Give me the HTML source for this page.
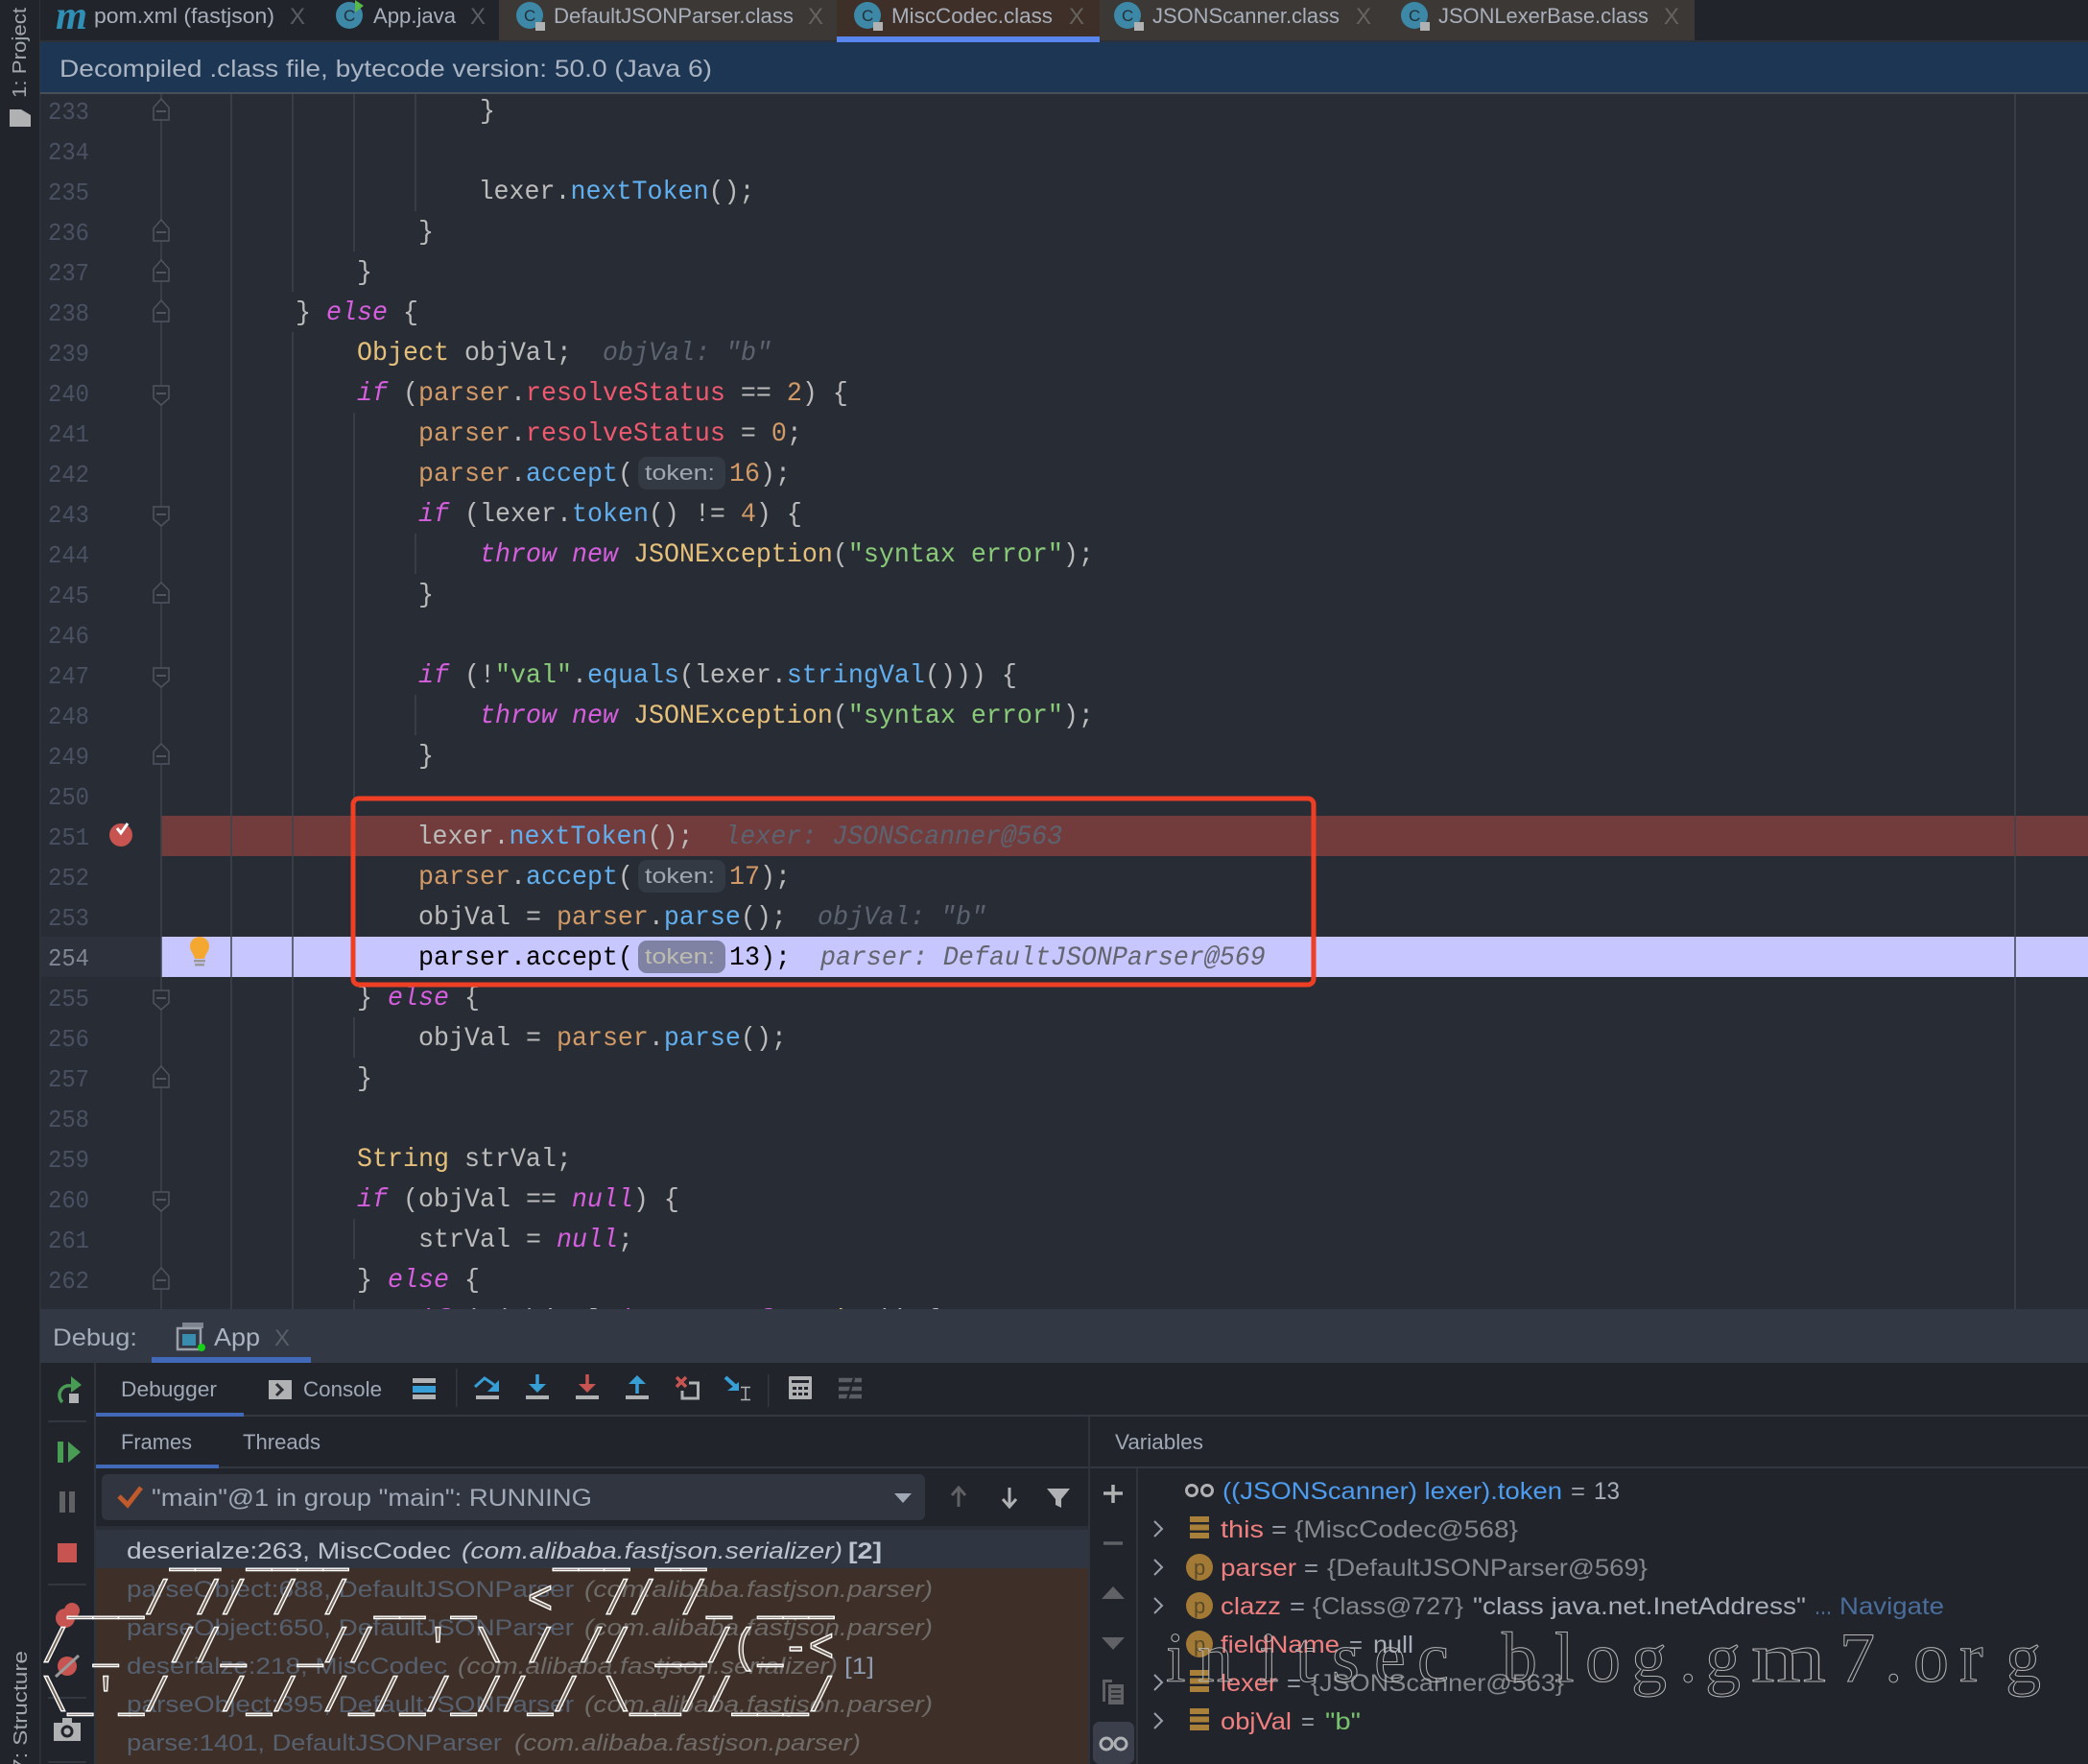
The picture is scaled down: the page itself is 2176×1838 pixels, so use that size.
<!DOCTYPE html>
<html><head><meta charset="utf-8"><title>IDE</title>
<style>
html,body{margin:0;padding:0;background:#21252b;width:2176px;height:1838px;overflow:hidden}
svg{display:block}
text{white-space:pre}
.u{font-family:"Liberation Sans",sans-serif}
.mono{font-family:"Liberation Mono",monospace}
.code text{font-family:"Liberation Mono",monospace;font-size:28px;fill:#bbbbbb}
.ln text{font-family:"Liberation Mono",monospace;font-size:26px;fill:#495162}
.k{fill:#d55fde;font-style:italic}.m{fill:#61afef}.f{fill:#ef596f}.p{fill:#d19a66}.c{fill:#e5c07b}.s{fill:#89ca78}.h{fill:#5c6370;font-style:italic}
.fold{fill:#282c34;stroke:#4f545e;stroke-width:1.5}
.g{stroke:#3f434c;stroke-width:1.5}
.tab{font-size:22px;fill:#a8afbb}
.fr{font-size:24px;fill:#56606f}.fi{font-size:24px;fill:#6f6b68;font-style:italic}
.v{font-size:25px}.nm{fill:#f08080}.eq{fill:#9aa0aa}.val{fill:#85888c}
</style></head><body>
<svg xmlns="http://www.w3.org/2000/svg" width="2176" height="1838" viewBox="0 0 2176 1838">
<rect width="2176" height="1838" fill="#21252b"/>
<!-- editor -->
<rect x="42" y="96" width="2134" height="1270" fill="#282c34"/>
<rect x="41" y="0" width="1.5" height="1838" fill="#2f333b"/>
<!-- tabs -->
<rect x="42" y="0" width="2134" height="42" fill="#21252b"/>
<rect x="520" y="0" width="352" height="42" fill="#3b3835"/>
<rect x="872" y="0" width="274" height="44" fill="#3e3028"/>
<rect x="1146" y="0" width="620" height="42" fill="#3b3835"/>
<rect x="42" y="42" width="2134" height="2" fill="#2c3038"/>
<rect x="872" y="38" width="274" height="6" fill="#5886ee"/>
<text x="58" y="30" font-family="Liberation Serif" font-style="italic" font-weight="bold" font-size="42" fill="#2f8fb5" textLength="33" lengthAdjust="spacingAndGlyphs">m</text>
<text class="u tab" x="98" y="24" textLength="188" lengthAdjust="spacingAndGlyphs">pom.xml (fastjson)</text>
<text class="u" x="302" y="25" font-size="24" fill="#5a5d62" textLength="16" lengthAdjust="spacingAndGlyphs">X</text>
<circle cx="364" cy="16" r="14" fill="#3d88a6"/><text class="u" x="358" y="22" font-size="17" fill="#21303a">C</text><path d="M370 0v13l9-7z" fill="#58b848"/>
<text class="u tab" x="389" y="24" textLength="86" lengthAdjust="spacingAndGlyphs">App.java</text>
<text class="u" x="490" y="25" font-size="24" fill="#5a5d62" textLength="16" lengthAdjust="spacingAndGlyphs">X</text>
<circle cx="552" cy="16" r="14" fill="#3d88a6"/><text class="u" x="546" y="22" font-size="17" fill="#21303a">C</text><rect x="558" y="23" width="10" height="9" fill="#afb1b3"/>
<text class="u tab" x="577" y="24" textLength="250" lengthAdjust="spacingAndGlyphs">DefaultJSONParser.class</text>
<text class="u" x="842" y="25" font-size="24" fill="#66645f" textLength="16" lengthAdjust="spacingAndGlyphs">X</text>
<circle cx="904" cy="16" r="14" fill="#3d88a6"/><text class="u" x="898" y="22" font-size="17" fill="#21303a">C</text><rect x="910" y="23" width="10" height="9" fill="#afb1b3"/>
<text class="u tab" x="929" y="24" textLength="168" lengthAdjust="spacingAndGlyphs">MiscCodec.class</text>
<text class="u" x="1114" y="25" font-size="24" fill="#66645f" textLength="16" lengthAdjust="spacingAndGlyphs">X</text>
<circle cx="1175" cy="16" r="14" fill="#3d88a6"/><text class="u" x="1169" y="22" font-size="17" fill="#21303a">C</text><rect x="1182" y="23" width="10" height="9" fill="#afb1b3"/>
<text class="u tab" x="1201" y="24" textLength="195" lengthAdjust="spacingAndGlyphs">JSONScanner.class</text>
<text class="u" x="1413" y="25" font-size="24" fill="#66645f" textLength="16" lengthAdjust="spacingAndGlyphs">X</text>
<circle cx="1474" cy="16" r="14" fill="#3d88a6"/><text class="u" x="1468" y="22" font-size="17" fill="#21303a">C</text><rect x="1480" y="23" width="10" height="9" fill="#afb1b3"/>
<text class="u tab" x="1499" y="24" textLength="219" lengthAdjust="spacingAndGlyphs">JSONLexerBase.class</text>
<text class="u" x="1734" y="25" font-size="24" fill="#66645f" textLength="16" lengthAdjust="spacingAndGlyphs">X</text>
<!-- banner -->
<rect x="42" y="44" width="2134" height="52" fill="#1c3653"/>
<rect x="42" y="96" width="2134" height="2" fill="#474f58"/>
<text class="u" x="62" y="80" font-size="25" fill="#aab4c2" textLength="680" lengthAdjust="spacingAndGlyphs">Decompiled .class file, bytecode version: 50.0 (Java 6)</text>
<!-- bands -->
<rect x="42" y="976" width="126" height="42" fill="#2d313b"/>
<rect x="168" y="850" width="2008" height="42" fill="#733c3c"/>
<rect x="168" y="976" width="2008" height="42" fill="#c8c6ff"/>
<!-- guides -->
<path class="g" d="M168 98V1364M241 98V1364M305 98V304M305 346V1364M369 98V262M369 430V1018M369 1060V1102M369 1270V1312M369 1354V1364M433 98V220M433 556V598M433 724V766M2100 98V1364" fill="none"/>
<!-- fold -->
<g>
<path class="fold" d="M160 125V112L168 103L176 112V125Z"/><path d="M163 116h10" stroke="#4f545e" stroke-width="2"/>
<path class="fold" d="M160 251V238L168 229L176 238V251Z"/><path d="M163 242h10" stroke="#4f545e" stroke-width="2"/>
<path class="fold" d="M160 293V280L168 271L176 280V293Z"/><path d="M163 284h10" stroke="#4f545e" stroke-width="2"/>
<path class="fold" d="M160 335V322L168 313L176 322V335Z"/><path d="M163 326h10" stroke="#4f545e" stroke-width="2"/>
<path class="fold" d="M160 402V415L168 422L176 415V402Z"/><path d="M163 410h10" stroke="#4f545e" stroke-width="2"/>
<path class="fold" d="M160 528V541L168 548L176 541V528Z"/><path d="M163 536h10" stroke="#4f545e" stroke-width="2"/>
<path class="fold" d="M160 628V615L168 607L176 615V628Z"/><path d="M163 620h10" stroke="#4f545e" stroke-width="2"/>
<path class="fold" d="M160 696V709L168 716L176 709V696Z"/><path d="M163 704h10" stroke="#4f545e" stroke-width="2"/>
<path class="fold" d="M160 796V783L168 775L176 783V796Z"/><path d="M163 788h10" stroke="#4f545e" stroke-width="2"/>
<path class="fold" d="M160 1032V1045L168 1052L176 1045V1032Z"/><path d="M163 1040h10" stroke="#4f545e" stroke-width="2"/>
<path class="fold" d="M160 1133V1120L168 1111L176 1120V1133Z"/><path d="M163 1124h10" stroke="#4f545e" stroke-width="2"/>
<path class="fold" d="M160 1242V1255L168 1262L176 1255V1242Z"/><path d="M163 1250h10" stroke="#4f545e" stroke-width="2"/>
<path class="fold" d="M160 1343V1330L168 1321L176 1330V1343Z"/><path d="M163 1334h10" stroke="#4f545e" stroke-width="2"/>
</g>
<!-- line numbers -->
<g class="ln">
<text x="50" y="124" textLength="43" lengthAdjust="spacingAndGlyphs">233</text>
<text x="50" y="166" textLength="43" lengthAdjust="spacingAndGlyphs">234</text>
<text x="50" y="208" textLength="43" lengthAdjust="spacingAndGlyphs">235</text>
<text x="50" y="250" textLength="43" lengthAdjust="spacingAndGlyphs">236</text>
<text x="50" y="292" textLength="43" lengthAdjust="spacingAndGlyphs">237</text>
<text x="50" y="334" textLength="43" lengthAdjust="spacingAndGlyphs">238</text>
<text x="50" y="376" textLength="43" lengthAdjust="spacingAndGlyphs">239</text>
<text x="50" y="418" textLength="43" lengthAdjust="spacingAndGlyphs">240</text>
<text x="50" y="460" textLength="43" lengthAdjust="spacingAndGlyphs">241</text>
<text x="50" y="502" textLength="43" lengthAdjust="spacingAndGlyphs">242</text>
<text x="50" y="544" textLength="43" lengthAdjust="spacingAndGlyphs">243</text>
<text x="50" y="586" textLength="43" lengthAdjust="spacingAndGlyphs">244</text>
<text x="50" y="628" textLength="43" lengthAdjust="spacingAndGlyphs">245</text>
<text x="50" y="670" textLength="43" lengthAdjust="spacingAndGlyphs">246</text>
<text x="50" y="712" textLength="43" lengthAdjust="spacingAndGlyphs">247</text>
<text x="50" y="754" textLength="43" lengthAdjust="spacingAndGlyphs">248</text>
<text x="50" y="796" textLength="43" lengthAdjust="spacingAndGlyphs">249</text>
<text x="50" y="838" textLength="43" lengthAdjust="spacingAndGlyphs">250</text>
<text x="50" y="880" textLength="43" lengthAdjust="spacingAndGlyphs">251</text>
<text x="50" y="922" textLength="43" lengthAdjust="spacingAndGlyphs">252</text>
<text x="50" y="964" textLength="43" lengthAdjust="spacingAndGlyphs">253</text>
<text x="50" y="1006" textLength="43" lengthAdjust="spacingAndGlyphs" style="fill:#7f8694">254</text>
<text x="50" y="1048" textLength="43" lengthAdjust="spacingAndGlyphs">255</text>
<text x="50" y="1090" textLength="43" lengthAdjust="spacingAndGlyphs">256</text>
<text x="50" y="1132" textLength="43" lengthAdjust="spacingAndGlyphs">257</text>
<text x="50" y="1174" textLength="43" lengthAdjust="spacingAndGlyphs">258</text>
<text x="50" y="1216" textLength="43" lengthAdjust="spacingAndGlyphs">259</text>
<text x="50" y="1258" textLength="43" lengthAdjust="spacingAndGlyphs">260</text>
<text x="50" y="1300" textLength="43" lengthAdjust="spacingAndGlyphs">261</text>
<text x="50" y="1342" textLength="43" lengthAdjust="spacingAndGlyphs">262</text>
</g>
<!-- inlays -->
<rect x="665" y="476" width="91" height="34" rx="9" fill="#343a44"/>
<rect x="665" y="896" width="91" height="34" rx="9" fill="#343a44"/>
<rect x="665" y="980" width="91" height="34" rx="9" fill="#7f82a3"/>
<text class="u" x="672" y="500" font-size="22" fill="#a3a8b0" textLength="73" lengthAdjust="spacingAndGlyphs">token:</text>
<text class="u" x="672" y="920" font-size="22" fill="#a3a8b0" textLength="73" lengthAdjust="spacingAndGlyphs">token:</text>
<text class="u" x="672" y="1004" font-size="22" fill="#bdbdb0" textLength="73" lengthAdjust="spacingAndGlyphs">token:</text>
<!-- code -->
<g class="code" transform="translate(180 -1) scale(.95238 1)">
<text x="336" y="124">}</text>
<text x="334.500" y="208">lexer.<tspan class="m">nextToken</tspan>();</text>
<text x="268.8" y="250">}</text>
<text x="201.6" y="292">}</text>
<text x="134.4" y="334">} <tspan class="k">else</tspan> {</text>
<text x="201.6" y="376"><tspan class="c">Object</tspan> objVal;</text><text x="470.4" y="376" class="h" style="fill:#5c6370">objVal: "b"</text>
<text x="201.6" y="418"><tspan class="k">if</tspan> (<tspan class="p">parser</tspan>.<tspan class="f">resolveStatus</tspan> == <tspan class="p">2</tspan>) {</text>
<text x="268.8" y="460"><tspan class="p">parser</tspan>.<tspan class="f">resolveStatus</tspan> = <tspan class="p">0</tspan>;</text>
<text x="268.8" y="502"><tspan class="p">parser</tspan>.<tspan class="m">accept</tspan>(</text><text x="609" y="502"><tspan class="p">16</tspan>);</text>
<text x="268.8" y="544"><tspan class="k">if</tspan> (lexer.<tspan class="m">token</tspan>() != <tspan class="p">4</tspan>) {</text>
<text x="336" y="586"><tspan class="k">throw new</tspan> <tspan class="c">JSONException</tspan>(<tspan class="s">"syntax error"</tspan>);</text>
<text x="268.8" y="628">}</text>
<text x="268.8" y="712"><tspan class="k">if</tspan> (!<tspan class="s">"val"</tspan>.<tspan class="m">equals</tspan>(lexer.<tspan class="m">stringVal</tspan>())) {</text>
<text x="336" y="754"><tspan class="k">throw new</tspan> <tspan class="c">JSONException</tspan>(<tspan class="s">"syntax error"</tspan>);</text>
<text x="268.8" y="796">}</text>
<text x="267.300" y="880">lexer.<tspan class="m">nextToken</tspan>();</text><text x="604" y="880" class="h" style="fill:#5c6370">lexer: JSONScanner@563</text>
<text x="268.8" y="922"><tspan class="p">parser</tspan>.<tspan class="m">accept</tspan>(</text><text x="609" y="922"><tspan class="p">17</tspan>);</text>
<text x="268.8" y="964">objVal = <tspan class="p">parser</tspan>.<tspan class="m">parse</tspan>();</text><text x="705.600" y="964" class="h" style="fill:#5c6370">objVal: "b"</text>
<text x="268.8" y="1006" style="fill:#000">parser.accept(</text><text x="609" y="1006" style="fill:#000">13);</text><text x="708.7" y="1006" class="h" style="fill:#62646e">parser: DefaultJSONParser@569</text>
<text x="201.6" y="1048">} <tspan class="k">else</tspan> {</text>
<text x="268.8" y="1090">objVal = <tspan class="p">parser</tspan>.<tspan class="m">parse</tspan>();</text>
<text x="201.6" y="1132">}</text>
<text x="201.6" y="1216"><tspan class="c">String</tspan> strVal;</text>
<text x="201.6" y="1258"><tspan class="k">if</tspan> (objVal == <tspan class="k">null</tspan>) {</text>
<text x="268.8" y="1300">strVal = <tspan class="k">null</tspan>;</text>
<text x="201.6" y="1342">} <tspan class="k">else</tspan> {</text>
<text x="268.8" y="1384"><tspan class="k">if</tspan> (!(objVal <tspan class="k">instanceof</tspan> <tspan class="c">String</tspan>)) {</text>
</g>
<!-- breakpoint & bulb -->
<circle cx="126" cy="870" r="12" fill="#c75450"/>
<path d="M122 863l4 5 7-10" fill="none" stroke="#fff" stroke-width="3"/>
<path d="M198 986a10 10 0 0 1 20 0c0 5-4 8-5 13h-10c-1-5-5-8-5-13z" fill="#f4a82f"/>
<rect x="202" y="1000" width="12" height="2.5" fill="#9a9a9a"/><rect x="203" y="1004" width="10" height="2.5" fill="#9a9a9a"/>
<!-- red box -->
<rect x="368" y="832" width="1001" height="194" rx="6" fill="none" stroke="#ee3f24" stroke-width="5"/>
<!-- debug header -->
<rect x="42" y="1364" width="2134" height="56" fill="#323844"/>
<text class="u" x="55" y="1402" font-size="25" fill="#a3acb9" textLength="88" lengthAdjust="spacingAndGlyphs">Debug:</text>
<rect x="190" y="1378" width="22" height="6" fill="#7f8590"/>
<rect x="185" y="1384" width="24" height="22" fill="none" stroke="#9aa0aa" stroke-width="2.5"/>
<rect x="190" y="1390" width="14" height="12" fill="#3a8cae"/>
<circle cx="210" cy="1404" r="4" fill="#18d018"/>
<text class="u" x="223" y="1402" font-size="26" fill="#aab3c0" textLength="48" lengthAdjust="spacingAndGlyphs">App</text>
<text class="u" x="286" y="1402" font-size="24" fill="#5a5f68" textLength="16" lengthAdjust="spacingAndGlyphs">X</text>
<rect x="158" y="1414" width="166" height="6" fill="#4169b8"/>
<!-- rails -->
<rect x="41" y="1420" width="1.5" height="418" fill="#2f333b"/>
<rect x="98" y="1420" width="2" height="418" fill="#2f333b"/>
<!-- toolbar -->
<rect x="100" y="1474" width="2076" height="2" fill="#33373f"/>
<rect x="100" y="1472" width="154" height="4" fill="#4169b8"/>
<text class="u" x="126" y="1455" font-size="22" fill="#a0a8b6" textLength="100" lengthAdjust="spacingAndGlyphs">Debugger</text>
<rect x="280" y="1438" width="24" height="20" fill="#afb1b3"/><path d="M288 1442l6 6-6 6" fill="none" stroke="#2a2d33" stroke-width="3"/>
<text class="u" x="316" y="1455" font-size="22" fill="#a0a8b6" textLength="82" lengthAdjust="spacingAndGlyphs">Console</text>
<rect x="430" y="1436" width="24" height="5" fill="#afb1b3"/><rect x="430" y="1444" width="24" height="7" fill="#389fd6"/><rect x="430" y="1453" width="24" height="5" fill="#afb1b3"/>
<rect x="475" y="1426" width="1.5" height="40" fill="#33373f"/>
<path d="M495 1445l10-9 10 7" fill="none" stroke="#389fd6" stroke-width="3"/><path d="M520 1438v12h-12z" fill="#389fd6"/><rect x="496" y="1454" width="24" height="4" fill="#afb1b3"/>
<path d="M560 1432v11" stroke="#389fd6" stroke-width="3.5"/><path d="M551 1442h18l-9 9z" fill="#389fd6"/><rect x="548" y="1454" width="24" height="4" fill="#afb1b3"/>
<path d="M612 1432v11" stroke="#c75450" stroke-width="3.5"/><path d="M603 1442h18l-9 9z" fill="#c75450"/><rect x="600" y="1454" width="24" height="4" fill="#afb1b3"/>
<path d="M655 1442h18l-9-9z" fill="#389fd6"/><path d="M664 1441v11" stroke="#389fd6" stroke-width="3.5"/><rect x="652" y="1454" width="24" height="4" fill="#afb1b3"/>
<path d="M705 1435l10 10M715 1435l-10 10" stroke="#c75450" stroke-width="3.5"/><path d="M718 1441h9.500v16h-16.500v-8" fill="none" stroke="#afb1b3" stroke-width="3"/>
<path d="M756 1435l11 10" stroke="#389fd6" stroke-width="4"/><path d="M770 1440v9h-12z" fill="#389fd6"/><path d="M772 1445.500h10M777 1445v14M772 1458.500h10" stroke="#afb1b3" stroke-width="1.500" fill="none"/>
<rect x="800" y="1432" width="1.500" height="34" fill="#33373f"/>
<rect x="822" y="1434" width="24" height="24" rx="1" fill="#afb1b3"/><rect x="825" y="1438" width="18" height="3" fill="#21252b"/><path d="M826 1445h4v3h-4zM832 1445h4v3h-4zM838 1445h4v3h-4zM826 1451h4v3h-4zM832 1451h4v3h-4zM838 1451h4v3h-4z" fill="#21252b"/>
<path d="M874 1438h24M874 1447h24M874 1455h24" stroke="#5a5d63" stroke-width="4.500"/><path d="M890 1436l-7 22" stroke="#21252b" stroke-width="2.500"/>
<!-- left rail icons -->
<path d="M65 1461a10 10 0 0 1 9-17" fill="none" stroke="#499c54" stroke-width="3.500"/><path d="M74 1434l11 9-11 8z" fill="#499c54"/><rect x="72" y="1452" width="10" height="10" fill="#afb1b3"/>
<rect x="50" y="1480" width="40" height="2" fill="#33373f"/>
<rect x="60" y="1502" width="6" height="22" fill="#499c54"/><path d="M71 1502l13 11-13 11z" fill="#499c54"/>
<rect x="62" y="1554" width="6" height="22" fill="#5f6165"/><rect x="72" y="1554" width="6" height="22" fill="#5f6165"/>
<rect x="60" y="1608" width="20" height="20" fill="#c75450"/>
<rect x="50" y="1650" width="40" height="2" fill="#33373f"/>
<circle cx="75" cy="1678" r="8" fill="#c75450"/><circle cx="68" cy="1686" r="10" fill="#c75450"/>
<circle cx="70" cy="1736" r="10" fill="#c75450"/><path d="M58 1747l24-22" stroke="#9a9a9a" stroke-width="3"/>
<rect x="50" y="1768" width="40" height="2" fill="#33373f"/>
<rect x="56" y="1795" width="28" height="19" fill="#afb1b3"/><rect x="65" y="1790" width="10" height="5" fill="#afb1b3"/><circle cx="70" cy="1804" r="5" fill="none" stroke="#21252b" stroke-width="3"/>
<rect x="50" y="1835" width="40" height="2" fill="#33373f"/>
<!-- left tool strip -->
<text class="u" transform="translate(27 102) rotate(-90)" font-size="20" fill="#a3a8ae" textLength="94" lengthAdjust="spacingAndGlyphs">1: Project</text>
<path d="M10 114h12l10 6v12H10z" fill="#afb1b3"/>
<text class="u" transform="translate(28 1846) rotate(-90)" font-size="20" fill="#a3a8ae" textLength="126" lengthAdjust="spacingAndGlyphs">7: Structure</text>
<!-- frames tabs -->
<text class="u" x="126" y="1510" font-size="22" fill="#a0a8b6" textLength="74" lengthAdjust="spacingAndGlyphs">Frames</text>
<text class="u" x="253" y="1510" font-size="22" fill="#a0a8b6" textLength="81" lengthAdjust="spacingAndGlyphs">Threads</text>
<text class="u" x="1162" y="1510" font-size="22" fill="#a0a8b6" textLength="92" lengthAdjust="spacingAndGlyphs">Variables</text>
<rect x="100" y="1528" width="2076" height="2" fill="#33373f"/>
<rect x="100" y="1526" width="128" height="4" fill="#4169b8"/>
<rect x="106" y="1536" width="858" height="48" rx="6" fill="#31353f"/>
<path d="M124 1559l9 9 14-18" fill="none" stroke="#c05a2c" stroke-width="5"/>
<text class="u" x="158" y="1569" font-size="25" fill="#a0a9b7" textLength="459" lengthAdjust="spacingAndGlyphs">"main"@1 in group "main": RUNNING</text>
<path d="M932 1556h18l-9 10z" fill="#a0a8b6"/>
<path d="M999 1550v20M992 1558l7-8 7 8" fill="none" stroke="#5f6165" stroke-width="3"/>
<path d="M1052 1550v20M1045 1562l7 8 7-8" fill="none" stroke="#afb1b3" stroke-width="3"/>
<path d="M1091 1551h24l-9 11v9l-6-3v-6z" fill="#afb1b3"/>
<rect x="100" y="1590" width="1034" height="4" fill="#2a2e36"/>
<rect x="100" y="1594" width="1034" height="40" fill="#2f3642"/>
<rect x="100" y="1634" width="1034" height="204" fill="#3e3028"/>
<!-- frames -->
<text class="u" x="132" y="1624" font-size="24" fill="#bcc3cf" textLength="338" lengthAdjust="spacingAndGlyphs">deserialze:263, MiscCodec</text>
<text class="u" x="481" y="1624" font-size="24" fill="#bcc3cf" font-style="italic" textLength="397" lengthAdjust="spacingAndGlyphs">(com.alibaba.fastjson.serializer)</text>
<text class="u" x="884" y="1624" font-size="24" font-weight="bold" fill="#bcc3cf" textLength="35" lengthAdjust="spacingAndGlyphs">[2]</text>
<text class="u fr" x="132" y="1664" textLength="466" lengthAdjust="spacingAndGlyphs">parseObject:688, DefaultJSONParser</text>
<text class="u fi" x="609" y="1664" textLength="363" lengthAdjust="spacingAndGlyphs">(com.alibaba.fastjson.parser)</text>
<text class="u fr" x="132" y="1704" textLength="466" lengthAdjust="spacingAndGlyphs">parseObject:650, DefaultJSONParser</text>
<text class="u fi" x="609" y="1704" textLength="363" lengthAdjust="spacingAndGlyphs">(com.alibaba.fastjson.parser)</text>
<text class="u fr" x="132" y="1744" textLength="334" lengthAdjust="spacingAndGlyphs">deserialze:218, MiscCodec</text>
<text class="u fi" x="477" y="1744" textLength="396" lengthAdjust="spacingAndGlyphs">(com.alibaba.fastjson.serializer)</text>
<text class="u" x="880" y="1744" font-size="24" fill="#8f9bb0" textLength="31" lengthAdjust="spacingAndGlyphs">[1]</text>
<text class="u fr" x="132" y="1784" textLength="466" lengthAdjust="spacingAndGlyphs">parseObject:395, DefaultJSONParser</text>
<text class="u fi" x="609" y="1784" textLength="363" lengthAdjust="spacingAndGlyphs">(com.alibaba.fastjson.parser)</text>
<text class="u fr" x="132" y="1824" textLength="391" lengthAdjust="spacingAndGlyphs">parse:1401, DefaultJSONParser</text>
<text class="u fi" x="536" y="1824" textLength="361" lengthAdjust="spacingAndGlyphs">(com.alibaba.fastjson.parser)</text>
<!-- variables panel -->
<rect x="1134" y="1476" width="2" height="362" fill="#2f333b"/>
<rect x="1184" y="1530" width="2" height="308" fill="#2f333b"/>
<path d="M1160 1547v19M1150 1556h20" stroke="#afb1b3" stroke-width="3.500"/>
<path d="M1150 1608h20" stroke="#5f6165" stroke-width="3.500"/>
<path d="M1148 1666l12-13 12 13z" fill="#5f6165"/>
<path d="M1148 1706l12 13 12-13z" fill="#5f6165"/>
<path d="M1149 1750h10v3h-7v20h-3z" fill="#5f6165"/><rect x="1155" y="1755" width="16" height="21" fill="#5f6165"/><path d="M1158 1760h10M1158 1765h10M1158 1770h10" stroke="#21252b" stroke-width="1.500"/>
<rect x="1139" y="1794" width="43" height="44" rx="7" fill="#3a3f4b"/>
<circle cx="1153" cy="1817" r="6" fill="none" stroke="#afb1b3" stroke-width="3"/><circle cx="1168" cy="1817" r="6" fill="none" stroke="#afb1b3" stroke-width="3"/>
<circle cx="1242" cy="1553" r="5.500" fill="none" stroke="#afb1b3" stroke-width="3"/><circle cx="1258" cy="1553" r="5.500" fill="none" stroke="#afb1b3" stroke-width="3"/>
<text class="u v" x="1274" y="1562" fill="#4d9cf0" textLength="354" lengthAdjust="spacingAndGlyphs">((JSONScanner) lexer).token</text>
<text class="u v eq" x="1637" y="1562" textLength="15" lengthAdjust="spacingAndGlyphs">=</text>
<text class="u v" x="1661" y="1562" fill="#a8aeb8" textLength="27" lengthAdjust="spacingAndGlyphs">13</text>
<path d="M1203 1585l8 8-8 8M1203 1625l8 8-8 8M1203 1665l8 8-8 8M1203 1745l8 8-8 8M1203 1785l8 8-8 8" fill="none" stroke="#9aa0aa" stroke-width="2"/>
<path d="M1240 1580h20v6h-20zM1240 1588.500h20v6h-20zM1240 1597h20v6h-20zM1240 1740h20v6h-20zM1240 1748.500h20v6h-20zM1240 1757h20v6h-20zM1240 1780h20v6h-20zM1240 1788.500h20v6h-20zM1240 1797h20v6h-20z" fill="#a9803a"/>
<circle cx="1250" cy="1633" r="14" fill="#a37a35"/><text class="u" x="1244" y="1641" font-size="22" fill="#5a4a2a">p</text>
<circle cx="1250" cy="1673" r="14" fill="#a37a35"/><text class="u" x="1244" y="1681" font-size="22" fill="#5a4a2a">p</text>
<circle cx="1250" cy="1713" r="14" fill="#a37a35"/><text class="u" x="1244" y="1721" font-size="22" fill="#5a4a2a">p</text>
<text class="u v nm" x="1272" y="1602" textLength="45" lengthAdjust="spacingAndGlyphs">this</text><text class="u v eq" x="1325" y="1602" textLength="16" lengthAdjust="spacingAndGlyphs">=</text><text class="u v val" x="1349" y="1602" textLength="233" lengthAdjust="spacingAndGlyphs">{MiscCodec@568}</text>
<text class="u v nm" x="1272" y="1642" textLength="79" lengthAdjust="spacingAndGlyphs">parser</text><text class="u v eq" x="1359" y="1642" textLength="15" lengthAdjust="spacingAndGlyphs">=</text><text class="u v val" x="1383" y="1642" textLength="334" lengthAdjust="spacingAndGlyphs">{DefaultJSONParser@569}</text>
<text class="u v nm" x="1272" y="1682" textLength="63" lengthAdjust="spacingAndGlyphs">clazz</text><text class="u v eq" x="1344" y="1682" textLength="16" lengthAdjust="spacingAndGlyphs">=</text><text class="u v val" x="1368" y="1682" textLength="157" lengthAdjust="spacingAndGlyphs">{Class@727}</text><text class="u v" x="1535" y="1682" fill="#a8aeb8" textLength="347" lengthAdjust="spacingAndGlyphs">"class java.net.InetAddress"</text><text class="u v" x="1891" y="1682" fill="#4a6d9c" textLength="18" lengthAdjust="spacingAndGlyphs">...</text><text class="u v" x="1917" y="1682" fill="#4a6d9c" textLength="109" lengthAdjust="spacingAndGlyphs">Navigate</text>
<text class="u v nm" x="1272" y="1722" textLength="124" lengthAdjust="spacingAndGlyphs">fieldName</text><text class="u v eq" x="1406" y="1722" textLength="14" lengthAdjust="spacingAndGlyphs">=</text><text class="u v" x="1431" y="1722" fill="#a8aeb8" textLength="42" lengthAdjust="spacingAndGlyphs">null</text>
<text class="u v nm" x="1272" y="1762" textLength="59" lengthAdjust="spacingAndGlyphs">lexer</text><text class="u v eq" x="1341" y="1762" textLength="15" lengthAdjust="spacingAndGlyphs">=</text><text class="u v val" x="1366" y="1762" textLength="264" lengthAdjust="spacingAndGlyphs">{JSONScanner@563}</text>
<text class="u v nm" x="1272" y="1802" textLength="74" lengthAdjust="spacingAndGlyphs">objVal</text><text class="u v eq" x="1356" y="1802" textLength="14" lengthAdjust="spacingAndGlyphs">=</text><text class="u v" x="1381" y="1802" fill="#78c26d" textLength="37" lengthAdjust="spacingAndGlyphs">"b"</text>
<!-- watermark -->
<g font-family="Liberation Serif" font-size="74" fill="none" stroke="#b4b4b4" stroke-width="1">
<text y="1752" x="1215 1248 1312 1350 1388 1432 1477 1530 1565 1620 1652 1700 1750 1777">initsec blog.g</text>
<text y="1752" x="1825" textLength="78" lengthAdjust="spacingAndGlyphs">m</text>
<text y="1752" x="1917 1964 1994 2042 2090">7.org</text>
</g>
<!-- ascii art -->
<g class="mono" font-size="44.4" fill="#75655a" stroke="#fff" stroke-width="1.300">
<text transform="translate(43.600 1631) scale(1 1.1)">     __ ____        ___ __</text>
<text transform="translate(43.600 1681) scale(1 1.1)"> ___/ // / / __ _  &lt;  // /_ ___</text>
<text transform="translate(43.600 1731) scale(1 1.1)">/ _  //_  _//  ' \ / // __/(_-&lt;</text>
<text transform="translate(43.600 1782) scale(1 1.1)">\_'_/  /_/ /_/_/_//_/ \__//___/</text>
</g>
</svg>
</body></html>
